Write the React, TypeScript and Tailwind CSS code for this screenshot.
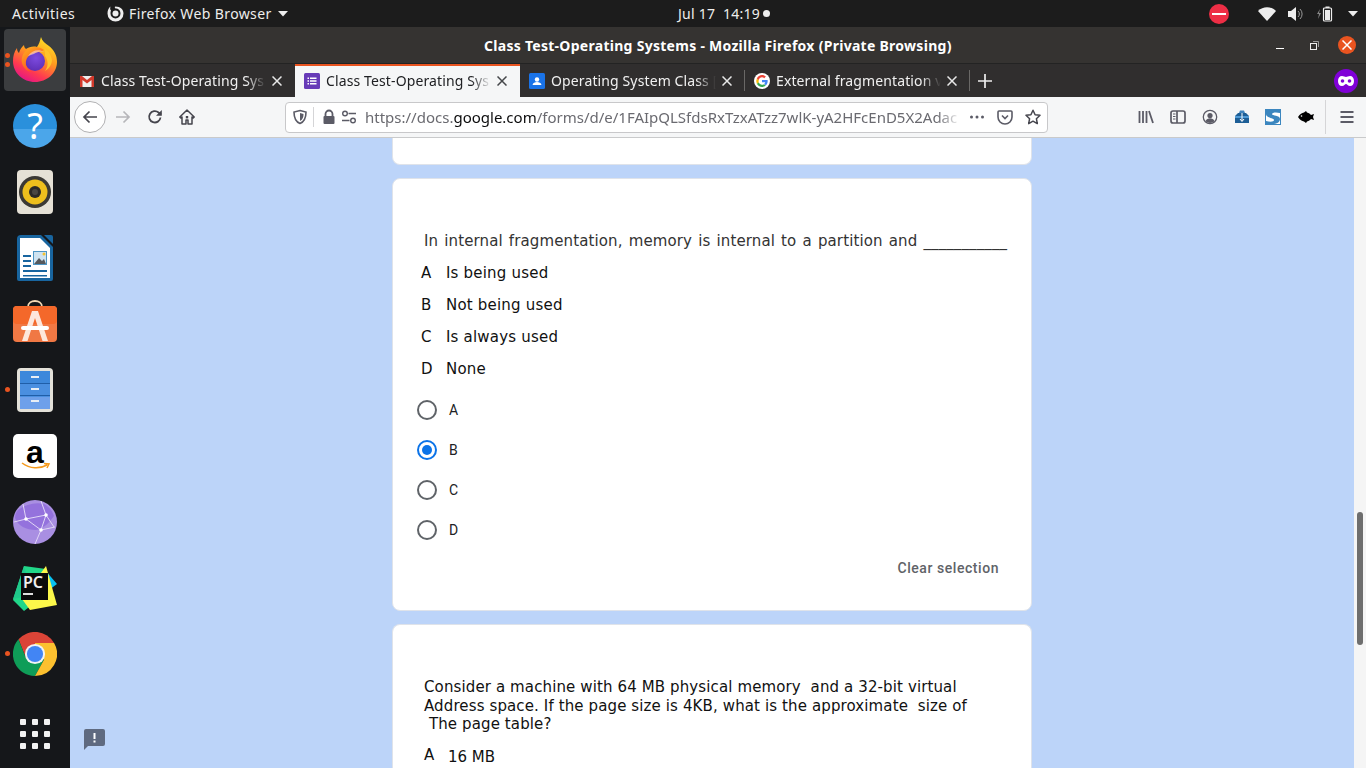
import React from "react";

const ui = "font-['Noto_Sans','Open_Sans',sans-serif]";
const q = "font-['DejaVu_Sans','Noto_Sans',sans-serif]";

function Caret() {
  return <svg width="10" height="6" viewBox="0 0 10 6" className="block"><path d="M0 0h10L5 5.500z" fill="#eee" /></svg>;
}

function FirefoxMark({ s = 46 }: { s?: number }) {
  return (
    <svg width={s} height={s} viewBox="0 0 46 46" className="block">
      <defs>
        <linearGradient id="ffa" x1="0.8" y1="0.05" x2="0.3" y2="1">
          <stop offset="0" stopColor="#ffe226" />
          <stop offset="0.4" stopColor="#ff9a1f" />
          <stop offset="0.75" stopColor="#ff3a50" />
          <stop offset="1" stopColor="#e31587" />
        </linearGradient>
        <radialGradient id="ffb" cx="0.55" cy="0.35" r="0.75">
          <stop offset="0" stopColor="#7d4be0" />
          <stop offset="1" stopColor="#5a2cb0" />
        </radialGradient>
        <linearGradient id="ffc" x1="0" y1="0" x2="0.6" y2="1">
          <stop offset="0" stopColor="#ffb21f" />
          <stop offset="1" stopColor="#ff4a1f" />
        </linearGradient>
      </defs>
      <path d="M29 1c1 4 4 6 8 9 5 4 8 9 8 16 0 11-10 20-22 20C11 46 1 37 1 25c0-5 1-9 4-13 0 3 1 4 2 5 1-4 3-6 5-8 0 2 1 3 2 4 3-2 7-3 11-2 2-3 3-6 4-10z" fill="url(#ffa)" />
      <circle cx="23" cy="25" r="10" fill="url(#ffb)" />
      <path d="M32 14c-5-4-12-4-17 0-4 3-6 8-5 13 1 5 6 9 10 9-4-2-7-6-6-11 1-4 3-6 6-7 4-2 9-2 12-4z" fill="url(#ffc)" />
      <path d="M16 20c4-6 11-7 16-4-4-1-7 0-10 2z" fill="#f5e6ff" opacity="0.5" />
      <path d="M33 20c3 4 4 10 0 15 4-2 7-7 7-11-1-5-3-9-8-12 1 2 1 5 1 8z" fill="#ffc42a" />
    </svg>
  );
}

function Help() {
  return (
    <div className="w-[44px] h-[44px] rounded-full bg-[linear-gradient(#2a90dc_57%,#4ba6ea_57%)] flex items-center justify-center">
      <span className="text-white text-[36px] font-['Noto_Sans',sans-serif] leading-none">?</span>
    </div>
  );
}

function Rhythm() {
  return (
    <svg width="36" height="44" viewBox="0 0 36 44" className="block">
      <rect width="36" height="44" rx="4" fill="#e5e1d6" />
      <circle cx="18" cy="22" r="16" fill="#3b3935" />
      <circle cx="18" cy="22" r="12.500" fill="#eebf1d" />
      <circle cx="18" cy="22" r="6" fill="#2c2a27" />
      <circle cx="18" cy="22" r="3" fill="#4a4742" />
    </svg>
  );
}

function Writer() {
  return (
    <svg width="36" height="46" viewBox="0 0 36 46" className="block">
      <path d="M4 0h20l12 12v32a2 2 0 0 1-2 2H2a2 2 0 0 1-2-2V4a4 4 0 0 1 4-4z" fill="#18659f" />
      <path d="M3 3h20l10 10v30H3z" fill="#fff" />
      <path d="M27 0h7a2 2 0 0 1 2 2v7z" fill="#18659f" />
      <path d="M6 20h8v2H6zM6 25h8v2H6zM6 30h8v2H6zM6 35h24v2H6zM6 40h24v1.500H6z" fill="#18659f" />
      <rect x="16" y="16" width="14" height="14" fill="#4e95c4" />
      <rect x="17" y="17" width="12" height="12" fill="#cfe3f0" />
      <path d="M17 29l5-6 3 3 2-2 2 5z" fill="#55595d" />
      <circle cx="27" cy="19" r="1.500" fill="#f2c230" />
    </svg>
  );
}

function Software() {
  return (
    <svg width="44" height="42" viewBox="0 0 44 42" className="block">
      <path d="M15 7c0-8 14-8 14 0" fill="none" stroke="#f3d9b5" strokeWidth="1.800" />
      <rect y="6" width="44" height="36" rx="4" fill="#f07844" />
      <rect y="6" width="44" height="18" rx="4" fill="#f4682a" />
      <path d="M9 41L19 11h6l10 30h-5.500L22 18l-7.500 23z" fill="#fde7dc" />
      <rect x="8" y="26" width="28" height="4" rx="2" fill="#fff" />
    </svg>
  );
}

function Files() {
  return (
    <svg width="36" height="44" viewBox="0 0 36 44" className="block">
      <rect width="36" height="44" rx="4" fill="#e3e1d9" />
      <rect x="3" y="3" width="30" height="38" rx="1" fill="#4a8fe0" />
      <rect x="3" y="3" width="30" height="12" fill="#3d88db" />
      <rect x="3" y="29" width="30" height="12" fill="#6ea0ea" />
      <rect x="3" y="15" width="30" height="1" fill="#1f5ea8" />
      <rect x="3" y="27" width="30" height="1" fill="#1f5ea8" />
      <rect x="14" y="8" width="8" height="2" fill="#e8eef5" />
      <rect x="14" y="20" width="8" height="2" fill="#e8eef5" />
      <rect x="14" y="32" width="8" height="2" fill="#e8eef5" />
    </svg>
  );
}

function Amazon() {
  return (
    <div className="w-[44px] h-[44px] rounded-[5px] bg-white relative flex justify-center">
      <span className="text-black text-[32px] font-bold leading-[36px] font-['Liberation_Sans',sans-serif]">a</span>
      <svg width="30" height="8" viewBox="0 0 30 8" className="absolute left-[8px] top-[28px]">
        <path d="M1 1c8 6 18 6 25 2M23 1.500l5 .5-2 4" fill="none" stroke="#f59a1c" strokeWidth="1.500" />
      </svg>
    </div>
  );
}

function Globe() {
  return (
    <svg width="44" height="44" viewBox="0 0 44 44" className="block">
      <circle cx="22" cy="22" r="22" fill="#a98fe2" />
      <path d="M5 10c8-6 18-8 26-6 4 2 8 6 10 12-6 8-10 12-18 14C13 30 5 26 2 18c0-3 1-6 3-8z" fill="#9472dd" />
      <path d="M1 22L13 19 33 15 28 30 13 19M33 15l8 12M28 30L22 44M33 15L28 1M13 19L10 4M28 30l14-3" fill="none" stroke="#e0d6f6" strokeWidth="1" />
      <circle cx="13" cy="19" r="1.800" fill="#fff" />
      <circle cx="33" cy="15" r="1.800" fill="#fff" />
      <circle cx="28" cy="30" r="1.800" fill="#fff" />
    </svg>
  );
}

function PyCharm() {
  return (
    <div className="w-[46px] h-[46px] relative">
      <svg width="46" height="46" viewBox="0 0 46 46" className="absolute inset-0">
        <path d="M12 1l22 3-4 28-18 14L1 35z" fill="#21d789" />
        <path d="M33 5l12 14-8 6z" fill="#07c3f2" />
        <path d="M34 1L45 40 18 45 10 34z" fill="#fcf84a" />
        <path d="M1 34L12 1 20 30z" fill="#1fc98a" />
      </svg>
      <div className="absolute left-[9px] top-[8px] w-[27px] h-[27px] bg-[#0a0a0a] flex flex-col pl-[2px]">
        <span className="text-[#eee] font-semibold text-[16px] leading-[17px] mt-[1px] font-['Noto_Sans',sans-serif]">PC</span>
        <span className="w-[10px] h-[2px] bg-[#ddd] mt-[2px]" />
      </div>
    </div>
  );
}

function Chrome({ s = 44 }: { s?: number }) {
  return (
    <svg width={s} height={s} viewBox="0 0 48 48" className="block">
      <path d="M24 24L44.800 12A24 24 0 0 0 6 8L14 28z" fill="#db4437" />
      <path d="M24 24L14 28 6 8A24 24 0 0 0 24 48L34 30z" fill="#0f9d58" />
      <path d="M24 24L34 30 24 48A24 24 0 0 0 44.800 12H24z" fill="#fcc02f" />
      <circle cx="24" cy="24" r="11" fill="#f1f3f4" />
      <circle cx="24" cy="24" r="8.800" fill="#4285f4" />
    </svg>
  );
}

function GoogleG() {
  return (
    <svg width="16" height="16" viewBox="0 0 48 48" className="block">
      <circle cx="24" cy="24" r="24" fill="#fff" />
      <path d="M41 24.500c0-1.200-.1-2.300-.3-3.400H24v6.400h9.700c-.4 2.200-1.700 4-3.600 5.300l5.600 4.300c3.300-3 5.300-7.500 5.300-12.600z" fill="#4285f4" />
      <path d="M24 42c4.700 0 8.600-1.500 11.500-4.200l-5.600-4.300c-1.600 1-3.500 1.700-5.900 1.700-4.500 0-8.400-3-9.700-7.100l-5.800 4.400C11.400 38.300 17.300 42 24 42z" fill="#34a853" />
      <path d="M14.300 28.100a10.800 10.800 0 0 1 0-7.200l-5.800-4.500a18 18 0 0 0 0 16.100z" fill="#fbbc05" />
      <path d="M24 13.100c2.600 0 4.900.9 6.700 2.600l5-5C32.600 7.800 28.700 6 24 6 17.300 6 11.400 9.800 8.500 16.400l5.800 4.500c1.300-4.500 5.200-7.800 9.700-7.800z" fill="#ea4335" />
    </svg>
  );
}

function Gmail() {
  return (
    <svg width="16" height="16" viewBox="0 0 16 16" className="block">
      <rect x="1" y="3" width="14" height="11" fill="#eee" />
      <path d="M1 3h2l5 4 5-4h2v11h-2.500V7L8 10.500 3.500 7v7H1z" fill="#d2392b" />
    </svg>
  );
}

function FormsIcon() {
  return (
    <svg width="16" height="16" viewBox="0 0 16 16" className="block">
      <rect width="16" height="16" rx="1.500" fill="#673ab7" />
      <path d="M3.500 4.500h1.500V6H3.500zM6 4.500h6.500V6H6zM3.500 7.300h1.500v1.500H3.500zM6 7.300h6.500v1.500H6zM3.500 10h1.500v1.500H3.500zM6 10h6.500v1.500H6z" fill="#fff" />
    </svg>
  );
}

function ClassIcon() {
  return (
    <svg width="16" height="16" viewBox="0 0 16 16" className="block">
      <rect width="16" height="16" rx="1.500" fill="#1a73e8" />
      <circle cx="8" cy="6.500" r="2.200" fill="#fff" />
      <path d="M3.500 12c.5-2.200 2.500-3 4.500-3s4 .8 4.500 3z" fill="#fff" />
    </svg>
  );
}

function Close({ c = "#e8e8e8" }: { c?: string }) {
  return (
    <svg width="10" height="10" viewBox="0 0 10 10" className="block">
      <path d="M.5.5l9 9M9.500.5l-9 9" stroke={c} strokeWidth="1.500" />
    </svg>
  );
}

function Tab({ icon, text, active, sep }: { icon: React.ReactNode; text: string; active?: boolean; sep?: boolean }) {
  return (
    <div className={active
      ? "w-[225px] h-[33px] flex items-center pl-[9px] pb-[2px] bg-[#f5f6f7] border-t-2 border-[#e95420] text-[#202124]"
      : "w-[225px] h-[33px] flex items-center pl-[9px] text-[#f0f0f0] relative"}>
      {icon}
      <span className="ml-[6px] w-[165px] text-[14px] tracking-[0.12px] whitespace-nowrap [mask-image:linear-gradient(to_right,black_88%,transparent_100%)]">{text}</span>
      <span className="ml-[6px]"><Close c={active ? "#45474a" : "#e8e8e8"} /></span>
      {sep && <span className="absolute right-0 top-[6px] h-[21px] w-px bg-[#6a6866]" />}
    </div>
  );
}

function G({ children, vb = "0 0 16 16" }: { children: React.ReactNode; vb?: string }) {
  return <svg width="16" height="16" viewBox={vb} className="block shrink-0">{children}</svg>;
}

function Toolbar() {
  const c = "#5b5b66";
  return (
    <div className="h-[41px] bg-[#f5f6f7] border-b border-[#c9cacb] flex items-center shrink-0">
      <div className="ml-[4px] w-[32px] h-[32px] rounded-full bg-white border border-[#b1b1b3] flex items-center justify-center">
        <G><path d="M15 8H2M7.500 2.500L2 8l5.500 5.500" fill="none" stroke="#45454d" strokeWidth="1.700" /></G>
      </div>
      <div className="ml-[9px]"><G><path d="M1 8h13M8.500 2.500L14 8l-5.500 5.500" fill="none" stroke="#b6b6ba" strokeWidth="1.700" /></G></div>
      <div className="ml-[16px]"><G><path d="M13.500 8.500A5.700 5.700 0 1 1 11.600 3.500L14 5.500" fill="none" stroke="#45454d" strokeWidth="1.800" /><path d="M14.800 1v5.800H9z" fill="#45454d" /></G></div>
      <div className="ml-[16px]"><G><path d="M8 1L.8 8l1 1L3 8v7h4v-4h2v4h4V8l1.200 1 1-1z" fill="none" stroke="#45454d" strokeWidth="1.500" strokeLinejoin="round" /><rect x="6.800" y="7" width="2.400" height="2.400" fill="#45454d" /></G></div>
      <div className="ml-[90px] w-[763px] h-[31px] bg-white border border-[#c8c8ca] rounded-[4px] flex items-center">
        <div className="ml-[6px]"><G><path d="M8 1.500l6 1.500c0 5-1 9.500-6 11.500C3 12.500 2 8 2 3z" fill="none" stroke="#5b5b66" strokeWidth="1.600" /><path d="M8 4l3.500 1c0 3-.7 5.500-3.500 7z" fill="#5b5b66" /></G></div>
        <div className="ml-[5px] w-px h-[20px] bg-[#d5d5d7]" />
        <div className="ml-[7px]"><G><path d="M4.500 7V5a3.500 3.500 0 0 1 7 0v2" fill="none" stroke="#5b5b66" strokeWidth="1.800" /><rect x="2.500" y="7" width="11" height="8" rx="1" fill="#5b5b66" /></G></div>
        <div className="ml-[4px]"><G><circle cx="4" cy="4.500" r="2.300" fill="none" stroke="#5b5b66" strokeWidth="1.400" /><path d="M7.500 4.500H15M1 11.500h7.500" stroke="#5b5b66" strokeWidth="1.500" /><circle cx="12" cy="11.500" r="2.300" fill="none" stroke="#5b5b66" strokeWidth="1.400" /></G></div>
        <div className={`ml-[8px] w-[596px] text-[15px] whitespace-nowrap overflow-hidden text-[#6a6a70] ${ui} [mask-image:linear-gradient(to_right,black_96%,transparent)]`}>
          https://docs.<span className="text-[#0c0c0d]">google.com</span>/forms/d/e/1FAIpQLSfdsRxTzxATzz7wlK-yA2HFcEnD5X2Adac
        </div>
        <div className="ml-[8px]"><G><circle cx="2.500" cy="8" r="1.500" fill={c} /><circle cx="8" cy="8" r="1.500" fill={c} /><circle cx="13.500" cy="8" r="1.500" fill={c} /></G></div>
        <div className="ml-[12px]"><G><path d="M2 2h12a1 1 0 0 1 1 1v5a7 7 0 0 1-14 0V3a1 1 0 0 1 1-1z" fill="none" stroke={c} strokeWidth="1.600" /><path d="M5 6.500l3 3 3-3" fill="none" stroke={c} strokeWidth="1.600" /></G></div>
        <div className="ml-[12px]"><G><path d="M8 1.200l2.100 4.500 4.900.6-3.600 3.400.9 4.900L8 12.200l-4.300 2.400.9-4.900L1 6.300l4.900-.6z" fill="none" stroke="#45454d" strokeWidth="1.500" strokeLinejoin="round" /></G></div>
      </div>
      <div className="ml-[90px]"><G><path d="M1.500 2v12M5 2v12M8.500 2v12M11 2l4 12" fill="none" stroke={c} strokeWidth="1.800" /></G></div>
      <div className="ml-[16px]"><G><rect x="1" y="2" width="14" height="12" rx="2" fill="none" stroke={c} strokeWidth="1.700" /><path d="M7 2v12" stroke={c} strokeWidth="1.700" /><path d="M3 5h2.500M3 7.500h2.500M3 10h2.500" stroke={c} strokeWidth="1.100" /></G></div>
      <div className="ml-[16px]"><G><circle cx="8" cy="8" r="6.700" fill="none" stroke={c} strokeWidth="1.300" /><circle cx="8" cy="6.500" r="2.600" fill={c} /><path d="M3.500 12.300c1-2.300 2.500-3 4.500-3s3.500.7 4.500 3A6.500 6.500 0 0 1 3.500 12.300z" fill={c} /></G></div>
      <div className="ml-[16px]"><G><path d="M1 7l3-3h8l3 3v7H1z" fill="#1d5e96" /><path d="M5 4l1-2.500h4L11 4z" fill="#3f83bd" /><path d="M1 7h14v2H1z" fill="#4f9ad6" /><path d="M8 4v8M6 10l2 2.500L10 10" stroke="#fff" strokeWidth="1" fill="none" /></G></div>
      <div className="ml-[15px]"><G><rect x=".5" y=".5" width="15" height="15" fill="#fff" stroke="#3b86bf" /><path d="M1 1h14v3c-4-1-8-.5-8 1 0 2 8 1 8 5 0 3-3 5-8 5H1v-3c4 1 8 1 8-1S1 9 1 5z" fill="#3b86bf" /></G></div>
      <div className="ml-[17px]"><G><path d="M0 8c2-3 4-4 6-4.500L8 2l1 1.500c2 .5 3 1.500 4 2.500l3-1-1 3 1 3-3-1c-1 1-2 2-4 2.500L8 14l-2-1.500C4 12 2 11 0 8z" fill="#000" /><circle cx="3.500" cy="7" r=".8" fill="#fff" /></G></div>
      <div className="ml-[11px] h-[34px] w-px bg-[#d5d5d7]" />
      <div className="ml-[13px]"><G><path d="M1.500 3h13M1.500 8h13M1.500 13h13" stroke={c} strokeWidth="2" /></G></div>
    </div>
  );
}

function Radio({ label, on }: { label: string; on?: boolean }) {
  return (
    <div className="h-[40px] flex items-center ml-[24px]">
      <div className={on
        ? "w-[20px] h-[20px] rounded-full border-2 border-[#0b73e8] flex items-center justify-center"
        : "w-[20px] h-[20px] rounded-full border-2 border-[#5f6368]"}>
        {on && <div className="w-[10px] h-[10px] rounded-full bg-[#0b73e8]" />}
      </div>
      <span className="ml-[12px] text-[14px] font-['Roboto',sans-serif] text-[#202124]">{label}</span>
    </div>
  );
}

function Opt({ l, t }: { l: string; t: string }) {
  return (
    <div className={`h-[32px] flex items-center text-[#111] ${q} text-[15px]`}>
      <span className="w-[24px] ml-[28px] shrink-0">{l}</span>
      <span className="ml-[1px] tracking-[0.2px]">{t}</span>
    </div>
  );
}

export default function App() {
  const dockItem = "h-[66px] flex items-center justify-center relative";
  const dot = "absolute left-[5px] w-[5px] h-[5px] rounded-full bg-[#e95420]";
  return (
    <div className={`w-[1366px] h-[768px] overflow-hidden flex flex-col ${ui} bg-[#1c1c1c]`}>
      <div className="h-[27px] bg-[#1c1c1c] text-[#eeeeec] text-[14px] flex items-center shrink-0">
        <div className="w-[678px] flex items-center shrink-0">
          <span className="ml-[12px] w-[95px] tracking-[0.5px]">Activities</span>
          <svg width="17" height="17" viewBox="0 0 17 17" className="block">
            <path d="M8.500 1.500c-1 0-1 1 0 2 3 0 5 2 5 5a5 5 0 0 1-10 0c0-1 0-2 .5-3-1-1-1-2-.5-4C1.500 3 .5 5.500.5 8.500a8 8 0 0 0 16 0c0-4-3-7-8-7z" fill="#eee" />
            <circle cx="8.500" cy="8.500" r="3" fill="#eee" />
          </svg>
          <span className="ml-[5px] tracking-[0.38px]">Firefox Web Browser</span>
          <span className="ml-[6px]"><Caret /></span>
        </div>
        <span className="w-[84px] whitespace-pre tracking-[0.25px]">Jul 17  14:19</span>
        <span className="w-[7px] h-[7px] rounded-full bg-[#eee] ml-[1px]" />
        <div className="ml-[439px] w-[20px] h-[20px] rounded-full bg-[#ed2e45] flex items-center justify-center"><span className="w-[14px] h-[2px] bg-white" /></div>
        <svg width="18" height="14" viewBox="0 0 18 14" className="ml-[29px] block"><path d="M0 4c5-5 13-5 18 0l-9 10z" fill="#eee" /></svg>
        <svg width="16" height="14" viewBox="0 0 16 14" className="ml-[12px] block"><path d="M0 4h3l5-4v14l-5-4H0z" fill="#eee" /><path d="M10 4a4 4 0 0 1 0 6M12 2a7 7 0 0 1 0 10" fill="none" stroke="#999" strokeWidth="1" /></svg>
        <svg width="16" height="16" viewBox="0 0 16 16" className="ml-[13px] block"><path d="M3 3L0 8h2l-1 5 3-6H2z" fill="#888" /><rect x="6.500" y="2" width="8" height="13" rx="1" fill="none" stroke="#eee" strokeWidth="1.200" /><rect x="8.500" y="0.500" width="4" height="1.500" fill="#eee" /><rect x="8" y="4" width="5" height="10" fill="#eee" /></svg>
        <span className="ml-[15px]"><Caret /></span>
      </div>

      <div className="flex-1 flex min-h-0">
        <div className="w-[70px] shrink-0 bg-[#15171a] flex flex-col">
          <div className={dockItem}>
            <div className="w-[62px] h-[62px] rounded-[4px] bg-[#3b3d3f] flex items-center justify-center"><span className="mb-[2px]"><FirefoxMark /></span></div>
            <span className={`${dot} top-[26px]`} />
            <span className={`${dot} top-[35px]`} />
          </div>
          <div className={dockItem}><Help /></div>
          <div className={dockItem}><Rhythm /></div>
          <div className={dockItem}><Writer /></div>
          <div className={dockItem}><span className="mb-[6px]"><Software /></span></div>
          <div className={dockItem}><Files /><span className={`${dot} top-[30px]`} /></div>
          <div className={dockItem}><Amazon /></div>
          <div className={dockItem}><Globe /></div>
          <div className={dockItem}><PyCharm /></div>
          <div className={dockItem}><Chrome /><span className={`${dot} top-[30px]`} /></div>
          <div className="mt-[14px] h-[66px] flex items-center justify-center">
            <div className="grid grid-cols-3 gap-[6px]">
              {[0, 1, 2, 3, 4, 5, 6, 7, 8].map((i) => <span key={i} className="w-[6px] h-[6px] rounded-[1px] bg-[#f2f2f2]" />)}
            </div>
          </div>
        </div>

        <div className="flex-1 flex flex-col min-w-0">
          <div className="h-[37px] bg-[#353331] border-b border-[#232323] flex items-center shrink-0">
            <span className="ml-[414px] w-[467px] text-center text-[14px] font-bold text-white whitespace-nowrap tracking-[0.28px]">Class Test-Operating Systems - Mozilla Firefox (Private Browsing)</span>
            <span className="ml-[325px] w-[8px] h-[1px] bg-white mt-[6px]" />
            <svg width="9" height="9" viewBox="0 0 9 9" className="ml-[26px] block"><rect x=".5" y="2.500" width="6" height="6" fill="none" stroke="#eee" /><path d="M3 .5h5.500V6" fill="none" stroke="#999" /></svg>
            <div className="ml-[19px] w-[18px] h-[18px] rounded-full bg-[#e95420] flex items-center justify-center"><Close c="#fff" /></div>
          </div>
          <div className="h-[33px] bg-[#302e2e] flex items-center shrink-0">
            <Tab icon={<Gmail />} text="Class Test-Operating Sys" />
            <Tab icon={<FormsIcon />} text="Class Test-Operating Sys" active />
            <Tab icon={<ClassIcon />} text="Operating System Class [" sep />
            <Tab icon={<GoogleG />} text="External fragmentation v" sep />
            <svg width="16" height="16" viewBox="0 0 16 16" className="ml-[7px] block"><path d="M8 1v14M1 8h14" stroke="#eee" strokeWidth="1.700" /></svg>
            <div className="ml-[341px] w-[24px] h-[24px] rounded-full bg-[#8000d7] flex items-center justify-center">
              <svg width="16" height="10" viewBox="0 0 16 10" className="block"><path d="M4 0c1.500 0 3 1 4 1s2.500-1 4-1c2.500 0 4 2 4 5s-1.500 5-4 5c-2 0-3-2-4-2s-2 2-4 2c-2.500 0-4-2-4-5s1.500-5 4-5z" fill="#fff" /><circle cx="4.500" cy="5" r="1.800" fill="#8000d7" /><circle cx="11.500" cy="5" r="1.800" fill="#8000d7" /></svg>
            </div>
          </div>
          <Toolbar />

          <div className="flex-1 bg-[#bcd4f9] flex min-h-0 relative overflow-hidden">
            <div className="flex-1 flex flex-col items-center gap-[13px] min-w-0">
              <div className="w-[640px] h-[27px] bg-white border-x border-b border-[#dfe3ea] rounded-b-[8px] shrink-0" />
              <div className="w-[640px] h-[433px] bg-white border border-[#dfe3ea] rounded-[8px] shrink-0 flex flex-col">
                <div className={`mt-[52px] ml-[31px] h-[20px] text-[15px] leading-[20px] text-[#333] whitespace-nowrap tracking-[0.12px] [word-spacing:1.200px] ${q}`}>In internal fragmentation, memory is internal to a partition and ___________</div>
                <div className="mt-[6px]">
                  <Opt l="A" t="Is being used" />
                  <Opt l="B" t="Not being used" />
                  <Opt l="C" t="Is always used" />
                  <Opt l="D" t="None" />
                </div>
                <div className="mt-[5px]">
                  <Radio label="A" />
                  <Radio label="B" on />
                  <Radio label="C" />
                  <Radio label="D" />
                </div>
                <div className="mt-[8px] mr-[32px] text-right text-[14px] font-medium font-['Roboto',sans-serif] text-[#5f6368] tracking-[0.55px]">Clear selection</div>
              </div>
              <div className="w-[640px] flex-1 bg-white border-x border-t border-[#dfe3ea] rounded-t-[8px] shrink-0 min-h-[160px]">
                <div className={`mt-[53px] ml-[31px] text-[15px] leading-[18.500px] text-[#111] tracking-[0.12px] ${q} whitespace-pre`}>
                  <div>Consider a machine with 64 MB physical memory  and a 32-bit virtual</div>
                  <div>Address space. If the page size is 4KB, what is the approximate  size of</div>
                  <div> The page table?</div>
                </div>
                <div className={`mt-[12px] ml-[31px] flex text-[15px] text-[#111] ${q}`}>
                  <span className="w-[24px] -mt-[2px]">A</span>
                  <span>16 MB</span>
                </div>
              </div>
            </div>
            <div className="w-[12px] shrink-0 bg-[#f5f5f5] pt-[374px] flex justify-center">
              <div className="w-[6px] h-[133px] rounded-full bg-[#6e6e6e]" />
            </div>
            <div className="absolute left-[14px] bottom-[18px]">
              <svg width="21" height="21" viewBox="0 0 21 21" className="block">
                <path d="M2 0h17a2 2 0 0 1 2 2v13a2 2 0 0 1-2 2H4l-4 4V2a2 2 0 0 1 2-2z" fill="#5f6a80" />
                <path d="M9.500 4h2v6h-2zM9.500 11.500h2v2h-2z" fill="#fff" />
              </svg>
            </div>
          </div>
        </div>
      </div>
    </div>
  );
}
